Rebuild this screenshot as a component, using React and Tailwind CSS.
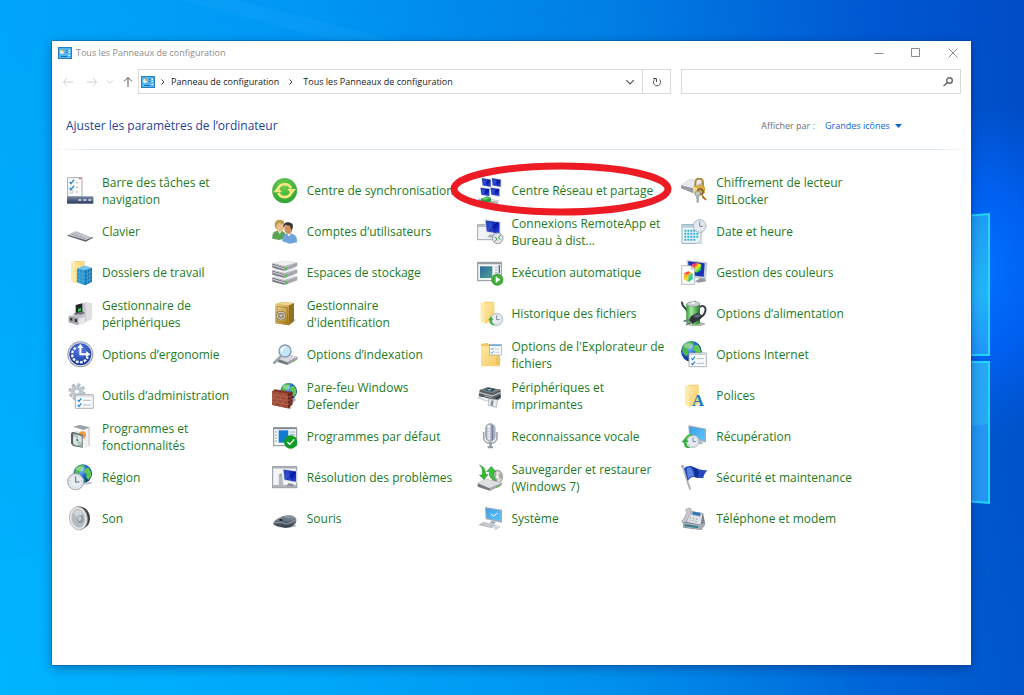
import { useState } from "react";

// gradients shared by all the icons
function IconDefs() {
  return (
    <svg className="absolute size-0" aria-hidden="true">
      <defs>
        <linearGradient id="folder" x1="0" y1="0" x2="1" y2="1">
          <stop offset="0" stopColor="#ffe9a6" />
          <stop offset="1" stopColor="#f3c963" />
        </linearGradient>
        <linearGradient id="screen" x1="0" y1="0" x2="1" y2="1">
          <stop offset="0" stopColor="#0a1a8c" />
          <stop offset="0.45" stopColor="#1b35c4" />
          <stop offset="0.5" stopColor="#0612a0" />
          <stop offset="1" stopColor="#2a50e0" />
        </linearGradient>
        <linearGradient id="sky" x1="0" y1="0" x2="1" y2="1">
          <stop offset="0" stopColor="#3f9fe6" />
          <stop offset="1" stopColor="#5cc4fb" />
        </linearGradient>
        <linearGradient id="metal" x1="0" y1="0" x2="0" y2="1">
          <stop offset="0" stopColor="#f4f4f6" />
          <stop offset="1" stopColor="#a3a5aa" />
        </linearGradient>
        <linearGradient id="gold" x1="0" y1="0" x2="1" y2="1">
          <stop offset="0" stopColor="#f0d78c" />
          <stop offset="1" stopColor="#a87c1c" />
        </linearGradient>
        <linearGradient id="bar" x1="0" y1="0" x2="0" y2="1">
          <stop offset="0" stopColor="#7787a3" />
          <stop offset="1" stopColor="#2c3c5c" />
        </linearGradient>
        <linearGradient id="photo" x1="0" y1="0" x2="1" y2="1">
          <stop offset="0" stopColor="#2f6aa3" />
          <stop offset="1" stopColor="#4fa08c" />
        </linearGradient>
        <linearGradient id="battery" x1="0" y1="0" x2="1" y2="0">
          <stop offset="0" stopColor="#2b9a2f" />
          <stop offset="0.35" stopColor="#a6eaa0" />
          <stop offset="1" stopColor="#1d7d25" />
        </linearGradient>
        <linearGradient id="mouse" x1="0" y1="0" x2="0" y2="1">
          <stop offset="0" stopColor="#9ba6b3" />
          <stop offset="1" stopColor="#2c343f" />
        </linearGradient>
        <linearGradient id="spectrum" x1="0" y1="0" x2="1" y2="1">
          <stop offset="0" stopColor="#ff2bd0" />
          <stop offset="0.3" stopColor="#ff4a2a" />
          <stop offset="0.5" stopColor="#ffe92b" />
          <stop offset="0.75" stopColor="#27dd4a" />
          <stop offset="1" stopColor="#18c8f4" />
        </linearGradient>
        <radialGradient id="globe" cx="0.4" cy="0.3" r="0.7">
          <stop offset="0" stopColor="#86c8fa" />
          <stop offset="0.5" stopColor="#2369cf" />
          <stop offset="1" stopColor="#072a80" />
        </radialGradient>
        <radialGradient id="ease" cx="0.5" cy="0.3" r="0.7">
          <stop offset="0" stopColor="#5b82e8" />
          <stop offset="1" stopColor="#15309d" />
        </radialGradient>
        <radialGradient id="sync" cx="0.45" cy="0.3" r="0.7">
          <stop offset="0" stopColor="#6fd04f" />
          <stop offset="1" stopColor="#2fa534" />
        </radialGradient>
      </defs>
    </svg>
  );
}

function Folder({ x = 12, y = 6 }) {
  return (
    <g transform={`translate(${x} ${y})`}>
      <path d="M10 0H40V58L12 62Z" fill="#f6cf6d" />
      <path d="M0 1L12 6V66L0 60Z" fill="#ffe9ab" />
      <path d="M12 6L15 3H41V58L12 66Z" fill="url(#folder)" />
    </g>
  );
}

function Globe({ cx, cy, r }) {
  return (
    <g transform={`translate(${cx} ${cy}) scale(${r / 30})`}>
      <circle r="30" fill="url(#globe)" />
      <path
        d="M-24 -16C-16 -28 -4 -30 4 -28L6 -20L-2 -17L-6 -8L-13 -5L-8 2L-12 14L-20 10C-26 4 -28 -6 -24 -16Z"
        fill="#4db848"
      />
      <path d="M8 -16L18 -20C26 -12 29 -2 27 9L18 20L11 11L13 1L4 -5Z" fill="#5cc94c" />
      <path d="M-6 17L4 14L10 24L0 28Z" fill="#2f9a48" />
      <ellipse cx="-8" cy="-16" rx="13" ry="8" fill="#fff" opacity="0.35" />
    </g>
  );
}

function Clock({ cx, cy, r }) {
  return (
    <g transform={`translate(${cx} ${cy}) scale(${r / 24})`}>
      <circle r="23" fill="#e6ecf1" stroke="#a3abb5" strokeWidth="3" />
      <circle r="17" fill="none" stroke="#8d98a5" strokeWidth="2" strokeDasharray="2 7" />
      <path d="M0 -15V1H11" fill="none" stroke="#5b6c80" strokeWidth="3" />
    </g>
  );
}

function Checklist({ x, y, w, h }) {
  return (
    <g transform={`translate(${x} ${y})`}>
      <rect x="1" y="1" width={w - 2} height={h - 2} rx="1" fill="#f8fafc" stroke="#9da4ac" strokeWidth="2.5" />
      <path d={`M3 5H${w - 3}`} stroke="#c3c9d1" strokeWidth="3" />
      <path d="M8 17l4 4l7 -9M8 32l4 4l7 -9" fill="none" stroke="#1a7fd6" strokeWidth="3.5" />
      <path d={`M24 18H${w - 8}M24 32H${w - 8}`} stroke="#a7b1bc" strokeWidth="2.5" />
    </g>
  );
}

function Monitor({ x, y, s = 1 }) {
  return (
    <g transform={`translate(${x} ${y}) scale(${s})`}>
      <path d="M0 0L44 6V44L4 36Z" fill="#d4d8e2" />
      <path d="M3 3L41 9V40L6 33Z" fill="url(#screen)" />
      <path d="M3 3L18 6L26 37L6 33Z" fill="#5b80ee" opacity="0.35" />
    </g>
  );
}

function TileIcon({ name }) {
  return (
    <svg viewBox="0 0 81 81" className="size-[27px] shrink-0" aria-hidden="true">
      {ICONS[name]}
    </svg>
  );
}

const ICONS = {
  taskbar: (
    <>
      <rect x="2" y="2" width="43" height="58" fill="#fbfbfc" stroke="#9b9ea4" strokeWidth="2.5" />
      <path d="M8 15l4 5l9 -12M8 33l4 5l9 -12" fill="none" stroke="#2386d8" strokeWidth="4" />
      <rect x="9" y="41" width="9" height="7" fill="none" stroke="#b3b7bd" strokeWidth="2" />
      <path d="M26 17H34M26 31H34M26 45H34" stroke="#a4a8b0" strokeWidth="2.5" />
      <path d="M36 5h6" stroke="#c84b4b" strokeWidth="3" />
      <rect y="58" width="79" height="22" fill="url(#bar)" />
      <path d="M34 69h9M49 69h9M64 69h9" stroke="#bcc8da" strokeWidth="6" />
    </>
  ),
  keyboard: (
    <>
      <path d="M2 50L26 38L77 59L56 69Z" fill="#cfd1d4" />
      <path d="M2 50L56 66L77 56V60L56 71L2 54Z" fill="#62666d" />
      <path d="M10 49L27 42L68 57L54 63Z" fill="#9a9da3" />
      <path d="M16 46L60 60M22 44L64 58M20 50L32 45M31 53L43 48M42 57L54 52M52 60L63 55" stroke="#e9eaec" strokeWidth="1.5" />
    </>
  ),
  workFolders: (
    <>
      <Folder />
      <path d="M30 29L54 20L75 27V68L54 79L30 70Z" fill="#2b93cf" />
      <path d="M54 34L75 27V68L54 79Z" fill="#1877b2" />
      <path d="M30 29L54 20L75 27L54 34Z" fill="#72c7ec" />
      <path d="M30 40L54 46L75 38M30 51L54 57L75 49M30 61L54 68L75 59M38 32V73M46 33V76M61 32V75M68 30V72" fill="none" stroke="#5bb9e6" strokeWidth="1.5" />
    </>
  ),
  devices: (
    <>
      <path d="M42 12L56 7L75 11V56L52 68L42 58Z" fill="#c9cacd" />
      <path d="M56 7L75 11V56L58 64Z" fill="#e0e0e3" />
      <path d="M26 15L46 10V42L26 46Z" fill="#22262a" />
      <path d="M33 26L42 24V33L33 35Z" fill="#39c84b" />
      <path d="M18 41L48 34L54 40L30 48Z" fill="#6f737a" />
      <path d="M5 48L36 43L54 50V69L33 75L5 67Z" fill="#bfc1c5" />
      <path d="M5 48L33 54V75L5 67Z" fill="#a4a7ab" />
      <path d="M9 53l7 2v8l-7 -2zM23 56l7 2v9l-7 -2z" fill="#34373c" />
      <path d="M36 55L54 51V69L36 74Z" fill="#e6e7e8" />
    </>
  ),
  ease: (
    <>
      <circle cx="40" cy="40" r="39" fill="#8f96a5" />
      <circle cx="40" cy="40" r="36" fill="#dfe4ee" />
      <circle cx="40" cy="40" r="33" fill="url(#ease)" />
      <path d="M26 20A24 24 0 1 0 62 48" fill="none" stroke="#fff" strokeWidth="7" strokeDasharray="8 4" />
      <path d="M37 43V21H31L40 9L49 21H43V37H57V30L70 40L57 50V43Z" fill="#fff" />
    </>
  ),
  adminTools: (
    <>
      <circle cx="30" cy="29" r="20" fill="none" stroke="#b4bac2" strokeWidth="11" strokeDasharray="9 6.7" />
      <circle cx="30" cy="29" r="14" fill="none" stroke="#c3c9d0" strokeWidth="11" />
      <circle cx="30" cy="29" r="8" fill="#fff" stroke="#8d949e" strokeWidth="2" />
      <path d="M14 48L26 43L27 59Z" fill="#b9bfc7" />
      <Checklist x={24} y={37} w={56} h={43} />
    </>
  ),
  programs: (
    <>
      <path d="M19 11L38 6L68 13V67L54 75L50 22Z" fill="#c6c8cc" />
      <path d="M50 19L68 14V67L54 74Z" fill="#eff0f2" />
      <path d="M66 14V68" stroke="#b3b6bb" strokeWidth="2" />
      <path d="M19 11L38 6L68 13L50 20Z" fill="#9da1a7" />
      <path d="M25 23L49 28V68L29 65Z" fill="#e6e8ea" />
      <circle cx="46" cy="36" r="11" fill="#ef9a42" />
      <path d="M12 31L18 26L48 36V74L18 69L12 61Z" fill="#5b6066" />
      <path d="M18 31L47 39V72L18 66Z" fill="#a3b5b1" />
      <ellipse cx="31" cy="51" rx="13" ry="16" fill="#dde8e4" />
      <path d="M31 51L23 38L35 36ZM31 51L43 59L33 67Z" fill="#aac7be" />
      <ellipse cx="31" cy="51" rx="3" ry="4" fill="#68736f" />
    </>
  ),
  region: (
    <>
      <ellipse cx="55" cy="57" rx="20" ry="5" fill="#aab4c2" opacity="0.7" />
      <Globe cx={47} cy={29} r={28} />
      <Clock cx={26} cy={53} r={25} />
    </>
  ),
  sound: (
    <>
      <path d="M28 5C55 1 69 20 69 40C69 58 59 70 38 75Z" fill="#3e4246" />
      <ellipse cx="34" cy="40" rx="27" ry="35" transform="rotate(-8 34 40)" fill="#e2e4e5" stroke="#a5a9ac" strokeWidth="2" />
      <ellipse cx="34" cy="40" rx="20" ry="28" transform="rotate(-8 34 40)" fill="#b4bbc0" />
      <path d="M20 24C27 12 39 13 46 24L35 42Z" fill="#d0d6da" />
      <ellipse cx="40" cy="43" rx="9" ry="12" fill="#8d99a1" />
      <ellipse cx="38" cy="41" rx="5" ry="7" fill="#c4d1d9" />
    </>
  ),
  sync: (
    <>
      <circle cx="38" cy="41" r="37" fill="url(#sync)" stroke="#38a23c" strokeWidth="1" />
      <path d="M18 36A21 21 0 0 1 57 34" fill="none" stroke="#fbe780" strokeWidth="8" />
      <path d="M46 36H72L59 52Z" fill="#fbe780" />
      <path d="M58 46A21 21 0 0 1 19 48" fill="none" stroke="#fbe780" strokeWidth="8" />
      <path d="M30 46H4L17 30Z" fill="#fbe780" />
    </>
  ),
  users: (
    <>
      <path d="M1 62C0 46 5 40 17 38L32 40C42 45 43 55 42 61L22 66Z" fill="#5aa356" />
      <path d="M15 34L31 36L23 49Z" fill="#e8ede5" />
      <ellipse cx="24" cy="24" rx="13" ry="17" fill="#e9bd8b" />
      <path d="M9 27C4 7 22 1 35 9L38 24L33 18L20 14L14 23L13 35Z" fill="#b99d4c" />
      <path d="M31 70C31 55 37 47 48 46L60 47C72 51 76 60 75 73L53 77Z" fill="#6fa4dd" />
      <path d="M42 41L58 43L51 56Z" fill="#f1f5f9" />
      <ellipse cx="49" cy="32" rx="12" ry="16" fill="#cd935e" />
      <path d="M35 29C31 13 50 8 61 18C65 25 61 34 58 37L54 23L40 20Z" fill="#35312f" />
    </>
  ),
  storage: (
    <>
      {[44, 23, 2].map((y) => (
        <g key={y} transform={`translate(0 ${y})`}>
          <path d="M1 11L38 23V34L1 24Z" fill="#7b7e84" />
          <path d="M38 23L76 8V20L38 34Z" fill="#a4a7ad" />
          <path d="M1 11L40 1L76 8L38 23Z" fill="url(#metal)" />
          <path d="M8 11L40 3L69 8L38 19Z" fill="#eff0f2" />
          <path d="M40 25l5 -2v7l-5 2z" fill="#43bd36" />
          <path d="M3 17L36 27" stroke="#d5d7da" strokeWidth="3" />
        </g>
      ))}
    </>
  ),
  safe: (
    <>
      <path d="M49 70L75 61L68 57Z" fill="#babbc0" opacity="0.6" />
      <path d="M10 12L28 6L66 9V64L50 76L10 70Z" fill="#bb943d" />
      <path d="M10 12L28 6L66 9L50 17Z" fill="#ecd68f" />
      <path d="M50 17L66 9V64L50 76Z" fill="#947023" />
      <path d="M10 12L50 17V76L10 70Z" fill="url(#gold)" />
      <path d="M15 19L46 23V69L15 64Z" fill="none" stroke="#816123" strokeWidth="1.5" />
      <circle cx="27" cy="47" r="14" fill="#756747" />
      <circle cx="27" cy="47" r="11" fill="none" stroke="#e0dfd7" strokeWidth="3" />
      <path d="M16 47H38M27 36V58M19 39L35 55M35 39L19 55" stroke="#dcd9cc" strokeWidth="2" />
    </>
  ),
  indexing: (
    <>
      <path d="M17 53L42 39L76 48V55L46 72L17 63Z" fill="#777b81" />
      <path d="M17 53L42 39L76 48L46 64Z" fill="#d7d9dc" />
      <path d="M46 65L76 49V55L46 72Z" fill="#a1a4a9" />
      <path d="M62 61l7 -4v3l-7 4z" fill="#51bd38" />
      <path d="M24 43L29 48L10 68C5 71 1 67 4 62Z" fill="#9aa3b0" />
      <circle cx="39" cy="30" r="18" fill="#c5e4fa" stroke="#8a9aae" strokeWidth="4" />
      <path d="M26 29C28 20 35 16 43 17C37 21 32 24 30 33Z" fill="#fff" />
    </>
  ),
  firewall: (
    <>
      <Globe cx={50} cy={28} r={25} />
      <path d="M48 76L72 54L67 47L55 52Z" fill="#a4adba" />
      <path d="M1 27L9 22L64 31L55 38V80L1 69Z" fill="#83382b" />
      <path d="M1 27L48 35V79L1 69Z" fill="#a04b36" />
      <path d="M48 35L62 31V67L48 79Z" fill="#6b281f" />
      <path d="M1 38L48 46L62 41M1 48L48 57L62 50M1 58L48 68L62 59M14 30V40M34 33V43M7 39V49M25 43V53M42 46V56M15 51V61M34 55V65M8 60V70M27 64V74" fill="none" stroke="#c07d69" strokeWidth="1.5" />
    </>
  ),
  defaults: (
    <>
      <rect x="5" y="14" width="69" height="54" fill="#f5f6f7" stroke="#8c9299" strokeWidth="3" />
      <path d="M5 16H74" stroke="#858b92" strokeWidth="5" />
      <rect x="20" y="22" width="29" height="37" fill="#1479d0" />
      <path d="M9 27H15M9 36H15M9 45H15M9 54H15M54 27H70M54 35H70M54 43H70" stroke="#7a98b8" strokeWidth="2.5" />
      <circle cx="56" cy="57" r="20" fill="#109b24" />
      <path d="M46 57L53 64L67 49" fill="none" stroke="#fff" strokeWidth="4" />
    </>
  ),
  troubleshoot: (
    <>
      <rect x="2" y="8" width="72" height="63" fill="#f4f5f7" stroke="#8d939b" strokeWidth="3" />
      <path d="M2 11H74" stroke="#a9afb8" strokeWidth="5" />
      <path d="M4 66H72" stroke="#b1b4ba" strokeWidth="7" />
      <path d="M20 30L30 28L34 64L20 66Z" fill="#b6bac1" />
      <path d="M24 34L28 33" stroke="#3da84c" strokeWidth="3" />
      <Monitor x={32} y={14} s={0.98} />
      <path d="M50 57L64 60V67H43Z" fill="#8d939d" />
    </>
  ),
  mouse: (
    <>
      <ellipse cx="42" cy="62" rx="31" ry="7" fill="#bfc3c9" />
      <path d="M4 54C9 44 25 35 42 31C60 27 75 36 73 48C71 60 56 69 39 68L18 64C7 61 3 59 4 54Z" fill="url(#mouse)" />
      <path d="M5 54C18 51 30 52 40 57C49 57 60 52 71 45" fill="none" stroke="#a9b2bd" strokeWidth="2" />
      <path d="M20 43C31 43 39 47 43 54M30 36L44 42" fill="none" stroke="#4a5461" strokeWidth="2" />
      <path d="M23 44L31 46" stroke="#1f2630" strokeWidth="5" />
    </>
  ),
  network: (
    <>
      <path d="M3 67L64 75" stroke="#a1a7b0" strokeWidth="10" />
      <path d="M3 65L64 73" stroke="#e7e9ed" strokeWidth="4" />
      <Monitor x={13} y={2} s={0.68} />
      <Monitor x={43} y={2} s={0.68} />
      <Monitor x={9} y={30} s={0.68} />
      <Monitor x={39} y={30} s={0.68} />
      <path d="M12 66L31 58L42 63V74L25 80L12 74Z" fill="#2d9a43" />
      <path d="M14 66L31 60L39 64L24 69Z" fill="#5fd06a" />
    </>
  ),
  remote: (
    <>
      <rect x="2" y="20" width="49" height="45" fill="#f1f3f5" stroke="#a2a8b0" strokeWidth="3" />
      <path d="M2 24H51" stroke="#b8bdc5" strokeWidth="6" />
      <Monitor x={23} y={4} s={1.08} />
      <path d="M40 49L52 52L48 59L31 57Z" fill="#a9afb9" />
      <circle cx="62" cy="61" r="16" fill="#e2e5e8" stroke="#969da5" strokeWidth="3" />
      <path d="M53 57L60 63L54 70M71 52L64 58L70 65" fill="none" stroke="#42974a" strokeWidth="3" />
    </>
  ),
  autoplay: (
    <>
      <rect x="2" y="10" width="71" height="55" fill="#f0f2f4" stroke="#8c9298" strokeWidth="3" />
      <path d="M2 13H73" stroke="#989ea6" strokeWidth="5" />
      <rect x="9" y="22" width="37" height="35" fill="url(#photo)" />
      <path d="M54 25H62M54 33H62M54 41H62" stroke="#b1b7be" strokeWidth="3" />
      <path d="M67 18V43" stroke="#3c72a8" strokeWidth="4" />
      <circle cx="61" cy="62" r="17" fill="#43af36" stroke="#248d25" strokeWidth="2" />
      <path d="M56 52L70 62L56 72Z" fill="#fff" />
    </>
  ),
  history: (
    <>
      <Folder x={11} y={5} />
      <Clock cx={59} cy={58} r={19} />
      <path d="M34 60L42 49L49 61H44C44 69 49 73 56 76C44 78 37 71 38 61Z" fill="#3dab41" />
    </>
  ),
  explorer: (
    <>
      <path d="M12 8L32 6L38 12H68V73H12Z" fill="#f1c65b" />
      <rect x="37" y="10" width="36" height="32" fill="#f8fbfe" stroke="#93a5b7" strokeWidth="2" />
      <path d="M38 13H72" stroke="#6ca9da" strokeWidth="4" />
      <path d="M42 23l3 3l5 -6M42 34l3 3l5 -6" fill="none" stroke="#287cc5" strokeWidth="2.5" />
      <path d="M54 24H67M54 34H67" stroke="#a1afbd" strokeWidth="2" />
      <path d="M12 15H36V44H69V76H12Z" fill="url(#folder)" />
      <path d="M60 47V64Q60 68 64 68Q68 68 68 64V47" fill="none" stroke="#d8a944" strokeWidth="2" />
    </>
  ),
  printer: (
    <>
      <path d="M8 24L32 16L71 23V49L55 59L5 42Z" fill="#585d63" />
      <path d="M8 24L32 16L71 23L47 34Z" fill="#777e86" />
      <path d="M23 23L35 18L55 22L43 29Z" fill="#214957" />
      <path d="M30 23L36 21L44 23L39 26Z" fill="#9bd0d6" />
      <path d="M6 31L46 42L71 31" fill="none" stroke="#b9bfc6" strokeWidth="4" />
      <path d="M3 47L25 41L46 48L29 58Z" fill="#eff1f3" stroke="#8f969e" strokeWidth="1.5" />
      <path d="M13 42L43 50" stroke="#3a3f44" strokeWidth="3" />
      <path d="M36 50L62 53L58 76L33 70Z" fill="#e6e9ed" stroke="#858c95" strokeWidth="1.5" />
      <path d="M43 55L50 56L47 72L40 70Z" fill="#84919b" />
      <path d="M57 50L71 42" stroke="#303336" strokeWidth="4" />
    </>
  ),
  microphone: (
    <>
      <path d="M20 27V44C21 66 59 66 60 44V27" fill="none" stroke="#a2a7b1" strokeWidth="5" />
      <path d="M37 58H44V70H48V76H32V70H37Z" fill="#949aa4" />
      <rect x="26" y="2" width="28" height="53" rx="14" fill="#b0b5c3" stroke="#7f8695" strokeWidth="2" />
      <rect x="31" y="6" width="9" height="44" rx="4" fill="#edeff5" />
      <path d="M27 18H53M27 26H53M27 34H53M27 42H53" stroke="#7d859a" strokeWidth="1" />
      <path d="M46 7V51" stroke="#777fa0" strokeWidth="4" />
    </>
  ),
  backup: (
    <>
      <ellipse cx="61" cy="38" rx="16" ry="20" fill="#a9b0ac" stroke="#73807c" strokeWidth="1.5" />
      <path d="M61 38L54 20L70 25ZM61 38L74 47L63 56Z" fill="#e6e4da" />
      <ellipse cx="61" cy="38" rx="4" ry="5" fill="#fff" />
      <path d="M2 58L25 44L75 57V63L38 80L2 68Z" fill="#73777d" />
      <path d="M2 58L25 44L75 57L38 73Z" fill="#dedfe2" />
      <path d="M38 73L75 57V63L38 80Z" fill="#a5a8ae" />
      <path d="M58 68l9 -4v4l-9 4z" fill="#51af41" />
      <path d="M7 3C20 7 26 16 26 31H34L21 47L7 33H15C17 20 16 10 7 3Z" fill="#37b536" stroke="#157d22" strokeWidth="1" />
      <path d="M43 7L58 24H50C48 35 52 44 57 50C41 47 35 37 37 23H28Z" fill="#43bd3d" stroke="#157d22" strokeWidth="1" />
    </>
  ),
  system: (
    <>
      <path d="M24 6L75 14V53L26 43Z" fill="#9cafc0" />
      <path d="M27 10L71 17V48L29 39Z" fill="url(#sky)" />
      <path d="M42 26L49 34L61 24" fill="none" stroke="#fff" strokeWidth="3" />
      <path d="M44 47L57 50L52 57L37 55Z" fill="#a7adb4" />
      <path d="M3 60L19 50L60 60L44 70Z" fill="#c2c7cd" />
      <path d="M8 60L20 54L53 61L43 67Z" fill="#a5acb4" />
      <path d="M13 58L47 65M18 55L51 62M22 63L34 57M32 65L43 59" stroke="#eef0f2" strokeWidth="1.3" />
      <path d="M51 68L63 62L69 66L56 74Z" fill="#d7dadf" stroke="#a0a5ab" strokeWidth="1" />
    </>
  ),
  bitlocker: (
    <>
      <path d="M0 25L27 6L66 15V32L35 48L0 34Z" fill="#979ba1" />
      <path d="M0 25L27 6L66 15L36 34Z" fill="#e6e8e9" />
      <path d="M36 35L66 18V31L36 47Z" fill="#b9bcc0" />
      <path d="M43 29V17C43 1 66 1 66 17V31" fill="none" stroke="#ae8d45" strokeWidth="6" />
      <path d="M36 28L63 24L72 29V49L48 54L36 49Z" fill="#d6aa43" />
      <path d="M36 28L48 32V54L36 49Z" fill="#f0d681" />
      <circle cx="58" cy="44" r="8" fill="none" stroke="#85622a" strokeWidth="5" />
      <path d="M60 48L78 69L72 70L68 65L64 64Z" fill="#a47626" />
      <circle cx="50" cy="50" r="8" fill="#c4c8cc" stroke="#777d83" strokeWidth="2" />
      <path d="M47 56H54V75L49 78L45 73L48 69L45 65Z" fill="#a5abb0" />
    </>
  ),
  calendar: (
    <>
      <rect x="3" y="20" width="57" height="56" fill="#eef7fb" stroke="#93acba" strokeWidth="3" />
      <path d="M4 25H59" stroke="#b3cfda" strokeWidth="8" />
      <path d="M10 38H52M10 47H52M10 56H52M10 65H44" stroke="#3aaecd" strokeWidth="6" strokeDasharray="6 3" />
      <path d="M61 63V77H44L60 60Z" fill="#d1e1e8" />
      <Clock cx={56} cy={24} r={20} />
    </>
  ),
  colors: (
    <>
      <path d="M16 3L79 10L75 62L24 54Z" fill="#c7ccd2" />
      <path d="M21 7L71 13L68 53L27 48Z" fill="#1534b4" />
      <path d="M33 15L49 11L61 17L59 34L47 41L35 34Z" fill="url(#spectrum)" />
      <path d="M59 57L71 59L76 67L52 71L42 67Z" fill="#929aa4" />
      <path d="M2 20H31L41 30V76H2Z" fill="#fff" stroke="#969ba2" strokeWidth="2" />
      <path d="M31 20V30H41" fill="#e4e6e9" stroke="#969ba2" strokeWidth="2" />
      <path d="M9 43L22 37L35 43V60L22 69L9 61Z" fill="url(#spectrum)" />
      <path d="M22 48L35 43V60L22 69Z" fill="#14b6e0" opacity="0.6" />
      <path d="M9 43L22 48V69L9 61Z" fill="#f0dc28" opacity="0.7" />
    </>
  ),
  power: (
    <>
      <ellipse cx="45" cy="72" rx="28" ry="6" fill="#aeb3ab" />
      <path d="M3 5C2 27 18 20 20 37M53 23C65 14 76 18 73 33C71 45 65 50 52 53" fill="none" stroke="#37404c" strokeWidth="6" />
      <path d="M16 12L24 6H32L34 2H43L46 6L57 11V69C49 77 24 77 16 68Z" fill="url(#battery)" />
      <ellipse cx="37" cy="12" rx="20" ry="7" fill="#cbd1d5" stroke="#73807b" strokeWidth="1.5" />
      <path d="M32 5H42V12H32Z" fill="#eef0f1" />
      <path d="M30 48L50 38L66 47L58 58L34 72L24 61Z" fill="#30353a" />
      <path d="M25 59L8 64M32 67L15 74" stroke="#747b82" strokeWidth="5" />
      <path d="M36 48L51 42L61 47L47 54Z" fill="#656d74" />
    </>
  ),
  internet: (
    <>
      <Globe cx={31} cy={31} r={31} />
      <Checklist x={23} y={35} w={54} h={43} />
    </>
  ),
  fonts: (
    <>
      <Folder x={12} y={8} />
      <text x="33" y="72" fontFamily="Liberation Serif, serif" fontSize="50" fontWeight="bold" fill="#1779bd">A</text>
    </>
  ),
  recovery: (
    <>
      <path d="M22 7L75 17V58L25 46Z" fill="#9aaab6" />
      <path d="M25 11L71 19V52L27 42Z" fill="url(#sky)" />
      <path d="M51 54L66 56L63 64L43 62Z" fill="#adb4bb" />
      <Clock cx={36} cy={55} r={19} />
      <path d="M2 57L14 43L22 57H16C16 67 23 73 30 74C16 78 8 70 9 59Z" fill="#38a940" />
      <path d="M12 48C15 36 24 32 34 33L32 39C23 39 19 43 18 51Z" fill="#49be48" />
    </>
  ),
  flag: (
    <>
      <path d="M2 7L7 4L31 75L25 77Z" fill="#9ca0a4" />
      <path d="M5 6L29 75" stroke="#eceeef" strokeWidth="2" />
      <circle cx="4" cy="7" r="4" fill="#a4a7aa" />
      <path d="M9 13C20 3 32 5 43 11C55 18 65 18 79 19C72 27 68 33 67 43C57 40 50 44 42 40C33 37 25 43 20 51Z" fill="#2749bd" />
      <path d="M17 13C28 6 35 15 40 38C31 35 25 40 21 46Z" fill="#5f83e2" />
      <path d="M47 14C55 21 53 30 49 41L40 38C41 27 40 20 35 10Z" fill="#142e91" />
    </>
  ),
  phone: (
    <>
      <path d="M5 49L23 17L66 25L73 57L61 75L7 68Z" fill="#7d8389" />
      <path d="M7 48L24 18L64 26L59 59Z" fill="#dfe3e7" />
      <path d="M33 18L62 23L58 35L29 29Z" fill="#a4adb8" />
      <path d="M36 20L58 24L56 32L34 28Z" fill="#2775be" />
      <path d="M27 38l4 1M36 40l4 1M45 42l4 1M25 45l4 1M34 47l4 1M43 49l4 1" stroke="#8c949d" strokeWidth="3" />
      <path d="M14 14L26 8L32 15L17 49L5 54L2 47L9 42L17 23Z" fill="#c3c9ce" stroke="#7d848b" strokeWidth="1.5" />
      <path d="M7 52L59 61L71 52V63L59 74L7 66Z" fill="#a6afb5" />
      <path d="M11 57L52 64V70L11 64Z" fill="#377f91" />
    </>
  ),
};

const ITEMS = [
  { icon: "taskbar", lines: ["Barre des tâches et", "navigation"] },
  { icon: "sync", lines: ["Centre de synchronisation"] },
  { icon: "network", lines: ["Centre Réseau et partage"], circled: true },
  { icon: "bitlocker", lines: ["Chiffrement de lecteur", "BitLocker"] },
  { icon: "keyboard", lines: ["Clavier"] },
  { icon: "users", lines: ["Comptes d’utilisateurs"] },
  { icon: "remote", lines: ["Connexions RemoteApp et", "Bureau à dist..."] },
  { icon: "calendar", lines: ["Date et heure"] },
  { icon: "workFolders", lines: ["Dossiers de travail"] },
  { icon: "storage", lines: ["Espaces de stockage"] },
  { icon: "autoplay", lines: ["Exécution automatique"] },
  { icon: "colors", lines: ["Gestion des couleurs"] },
  { icon: "devices", lines: ["Gestionnaire de", "périphériques"] },
  { icon: "safe", lines: ["Gestionnaire", "d'identification"] },
  { icon: "history", lines: ["Historique des fichiers"] },
  { icon: "power", lines: ["Options d’alimentation"] },
  { icon: "ease", lines: ["Options d’ergonomie"] },
  { icon: "indexing", lines: ["Options d’indexation"] },
  { icon: "explorer", lines: ["Options de l'Explorateur de", "fichiers"] },
  { icon: "internet", lines: ["Options Internet"] },
  { icon: "adminTools", lines: ["Outils d’administration"] },
  { icon: "firewall", lines: ["Pare-feu Windows", "Defender"] },
  { icon: "printer", lines: ["Périphériques et", "imprimantes"] },
  { icon: "fonts", lines: ["Polices"] },
  { icon: "programs", lines: ["Programmes et", "fonctionnalités"] },
  { icon: "defaults", lines: ["Programmes par défaut"] },
  { icon: "microphone", lines: ["Reconnaissance vocale"] },
  { icon: "recovery", lines: ["Récupération"] },
  { icon: "region", lines: ["Région"] },
  { icon: "troubleshoot", lines: ["Résolution des problèmes"] },
  { icon: "backup", lines: ["Sauvegarder et restaurer", "(Windows 7)"] },
  { icon: "flag", lines: ["Sécurité et maintenance"] },
  { icon: "sound", lines: ["Son"] },
  { icon: "mouse", lines: ["Souris"] },
  { icon: "system", lines: ["Système"] },
  { icon: "phone", lines: ["Téléphone et modem"] },
];

function PanelIcon() {
  return (
    <svg viewBox="0 0 14 12" className="h-3 w-3.5 shrink-0" aria-hidden="true">
      <rect x="0.5" y="0.5" width="13" height="11" fill="#55b5ec" stroke="#2680bd" />
      <circle cx="4" cy="5" r="2" fill="#e8f6ff" />
      <path d="M4 5V2.5A2.5 2.5 0 0 1 6.500 5Z" fill="#f0b43c" />
      <path d="M8 3.500H9.500M8 5.500H9.500M3 9.500H9" stroke="#1c6fae" />
      <path d="M10.500 3.500H12M10.500 5.500H12M10.500 8.500H12" stroke="#fff" />
    </svg>
  );
}

function Chevron({ down = false, className }) {
  return (
    <svg viewBox="0 0 8 8" className={className} fill="none" stroke="currentColor" aria-hidden="true">
      <path d={down ? "M1 2.500L4 5.500L7 2.500" : "M2.500 1.500L5 4L2.500 6.500"} />
    </svg>
  );
}

function Arrow({ d }) {
  return (
    <svg viewBox="0 0 12 12" className="size-3" fill="none" stroke="currentColor" aria-hidden="true">
      <path d={d} />
    </svg>
  );
}

function Wallpaper() {
  return (
    <svg
      viewBox="0 0 1024 695"
      preserveAspectRatio="xMaxYMid slice"
      className="absolute inset-0 size-full"
      aria-hidden="true"
    >
      <defs>
        <linearGradient id="wall" x1="0" y1="0" x2="1" y2="0">
          <stop offset="0" stopColor="#00a6fa" />
          <stop offset="0.3" stopColor="#0097f4" />
          <stop offset="0.6" stopColor="#007ee4" />
          <stop offset="0.85" stopColor="#0058d2" />
          <stop offset="1" stopColor="#004cc6" />
        </linearGradient>
        <linearGradient id="wallBottom" x1="0" y1="0" x2="0" y2="1">
          <stop offset="0" stopColor="#00b8ff" stopOpacity="0" />
          <stop offset="1" stopColor="#00b8ff" stopOpacity="0.7" />
        </linearGradient>
        <linearGradient id="fadeRight" x1="0" y1="0" x2="1" y2="0">
          <stop offset="0" stopColor="#fff" />
          <stop offset="0.85" stopColor="#333" />
          <stop offset="1" stopColor="#222" />
        </linearGradient>
        <mask id="leftMask">
          <rect width="1024" height="695" fill="url(#fadeRight)" />
        </mask>
        <radialGradient id="glow">
          <stop offset="0" stopColor="#0070ff" />
          <stop offset="0.5" stopColor="#0066ff" stopOpacity="0.7" />
          <stop offset="1" stopColor="#0060f0" stopOpacity="0" />
        </radialGradient>
        <linearGradient id="pane" x1="0" y1="0" x2="0" y2="1">
          <stop offset="0" stopColor="#1f9cf4" />
          <stop offset="0.55" stopColor="#22b5fb" />
          <stop offset="1" stopColor="#2196fb" />
        </linearGradient>
      </defs>
      <rect width="1024" height="695" fill="url(#wall)" />
      <rect width="1024" height="695" fill="url(#wallBottom)" mask="url(#leftMask)" />
      <ellipse cx="985" cy="270" rx="110" ry="170" fill="url(#glow)" />
      <path d="M240 0L400 42H340L180 0Z" fill="#2cacff" opacity="0.15" />
      <path d="M0 558L52 552V695H0Z" fill="#00baff" opacity="0.15" />
      <path d="M940 218L989 214V355H940Z" fill="url(#pane)" />
      <path d="M940 362H989V503L940 499Z" fill="#2497f5" />
      <path d="M940 430L989 424V362H940Z" fill="#28a7f5" />
      <g fill="none" stroke="#22d6ff" strokeWidth="2">
        <path d="M940 218L989 214V355H940" />
        <path d="M940 362H989V503L940 499" />
      </g>
    </svg>
  );
}

export default function App() {
  const [search, setSearch] = useState("");

  return (
    <div className="relative flex min-h-screen flex-col bg-[#0085e8] pt-[41px] pr-[53px] pb-[30px] pl-[52px] font-['Open_Sans','Noto_Sans',sans-serif]">
      <IconDefs />
      <Wallpaper />

      <main className="relative flex flex-1 flex-col bg-white shadow-[0_0_0_1px_rgba(0,70,130,0.35),0_3px_10px_rgba(0,20,80,0.4)]">
        <header className="flex h-6 items-center gap-1 pl-1.5 text-[9px] text-[#8c8c8c]">
          <PanelIcon />
          <h1 className="flex-1">Tous les Panneaux de configuration</h1>
          <div className="flex items-center text-[#8c8c8c]">
            <button aria-label="Réduire" className="flex h-6 w-[37px] items-center justify-center">
              <Arrow d="M1.500 6.500H10.500" />
            </button>
            <button aria-label="Agrandir" className="flex h-6 w-[37px] items-center justify-center">
              <Arrow d="M1.500 1.500H9.500V9.500H1.500Z" />
            </button>
            <button aria-label="Fermer" className="flex h-6 w-[37px] items-center justify-center">
              <Arrow d="M1.500 1.500L10.500 10.500M10.500 1.500L1.500 10.500" />
            </button>
          </div>
        </header>

        <nav className="mt-1 flex h-[25px] pr-2.5 pl-2.5 text-[9px]">
          <div className="flex w-[76px] items-center text-[#d0d0d0]">
            <button aria-label="Précédent" className="mr-3">
              <Arrow d="M11 6H1.500M5 2L1.500 6L5 10" />
            </button>
            <button aria-label="Suivant" className="mr-2">
              <Arrow d="M1 6H10.500M7 2L10.500 6L7 10" />
            </button>
            <button aria-label="Emplacements récents" className="mr-2">
              <Chevron down className="size-2" />
            </button>
            <button aria-label="Dossier parent" className="text-[#555]">
              <Arrow d="M6 11V1.500M2 5.500L6 1.500L10 5.500" />
            </button>
          </div>
          <div className="flex flex-1 border border-[#d9d9d9]">
            <div className="flex flex-1 items-center gap-1 pl-0.5 text-[#1a1a1a]">
              <PanelIcon />
              <Chevron className="size-2 text-[#444]" />
              <a href="#panneau">Panneau de configuration</a>
              <Chevron className="mx-1 size-2 text-[#444]" />
              <a href="#tous">Tous les Panneaux de configuration</a>
            </div>
            <button aria-label="Emplacements précédents" className="flex w-6 items-center justify-center text-[#555]">
              <Chevron down className="size-2.5" />
            </button>
            <button aria-label="Actualiser" className="flex w-7 items-center justify-center border-l border-[#d9d9d9] text-[#555]">
              <Arrow d="M4 3.200A3.600 3.600 0 1 0 8.500 3.500M2 2.500H5.500V6" />
            </button>
          </div>
          <div className="ml-2.5 flex w-[280px] items-center border border-[#d9d9d9] pr-1.5">
            <input
              type="text"
              aria-label="Rechercher"
              value={search}
              onChange={(e) => setSearch(e.target.value)}
              className="h-full min-w-0 flex-1 px-2 outline-none"
            />
            <button aria-label="Lancer la recherche" className="text-[#666]">
              <svg viewBox="0 0 12 12" className="size-3" fill="none" stroke="currentColor" strokeWidth="1.400">
                <circle cx="7.500" cy="4.500" r="2.800" />
                <path d="M5.500 6.500L1.500 10" />
              </svg>
            </button>
          </div>
        </nav>

        <div className="mt-3 flex h-[43px] items-center justify-between pr-[69px] pb-1 pl-3.5">
          <h2 className="text-[12px] leading-[17px] text-[#1f3f9c]">Ajuster les paramètres de l’ordinateur</h2>
          <div className="flex items-center text-[9px] leading-[17px]">
            <label htmlFor="view" className="mr-2.5 text-[#6a6f7a]">
              Afficher par :
            </label>
            <div className="relative flex items-center">
              <select id="view" className="appearance-none bg-transparent pr-3 text-[#0a66d6] outline-none">
                <option>Grandes icônes</option>
              </select>
              <svg viewBox="0 0 7 4" className="pointer-events-none absolute right-0 h-1 w-[7px]">
                <path d="M0 0H7L3.500 4Z" fill="#0a66d6" />
              </svg>
            </div>
          </div>
        </div>
        <div className="flex h-px">
          <div className="w-10 bg-linear-to-r from-white to-[#d6e4f0]" />
          <div className="flex-1 bg-[#d6e4f0]" />
          <div className="w-10 bg-linear-to-l from-white to-[#d6e4f0]" />
        </div>

        <ul className="mt-5 grid auto-rows-[41px] grid-cols-4 pr-[85px] pl-[15px]">
          {ITEMS.map((item) => (
            <li key={item.icon} className={item.circled ? "relative z-10 flex items-center" : "flex items-center"}>
              <a href={`#${item.icon}`} className="flex items-center gap-2 text-[12px] leading-[17px] whitespace-nowrap text-[#1e7b1e]">
                <TileIcon name={item.icon} />
                <span>
                  {item.lines.map((line) => (
                    <span key={line} className="block">{line}</span>
                  ))}
                </span>
              </a>
              {item.circled && (
                <svg
                  viewBox="0 0 224 54"
                  className="pointer-events-none absolute -top-2 -left-7 h-[54px] w-[224px]"
                  aria-hidden="true"
                >
                  <ellipse cx="112" cy="27" rx="107" ry="23" fill="none" stroke="#ed1c24" strokeWidth="7" />
                </svg>
              )}
            </li>
          ))}
        </ul>
      </main>
    </div>
  );
}
